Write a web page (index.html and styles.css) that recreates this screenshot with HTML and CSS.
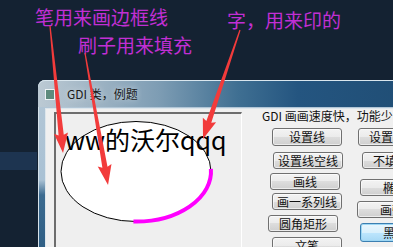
FILE: index.html
```html
<!DOCTYPE html>
<html lang="zh-CN">
<head>
    <meta charset="UTF-8">
    <title>GDI 类，例题</title>
    <link rel="stylesheet" href="styles.css">
</head>
<body>
    <div class="desk-band"></div>

    <div class="window">
        <div class="titlebar">
            <span class="app-icon"></span>
            <span class="title">GDI 类，例题</span>
        </div>
        <div class="client">
            <div class="picture">
                <svg width="184" height="140" viewBox="0 0 184 140">
                    <ellipse cx="80" cy="57.5" rx="75" ry="50" fill="#fff" stroke="#000" stroke-width="1"/>
                    <path d="M154.9 54.9 A75 50 0 0 1 77.4 107.5" fill="none" stroke="#ff00ff" stroke-width="4"/>
                    <text x="9" y="36" class="draw-text">ww的沃尔qqq</text>
                </svg>
            </div>
            <div class="panel">
                <div class="info">GDI 画画速度快，功能少</div>
                <div class="buttons">
                    <div class="col col1">
                        <button class="btn tall ml4">设置线</button>
                        <button class="btn ml5 mt6">设置线空线</button>
                        <button class="btn ml2 mt4">画线</button>
                        <button class="btn ml4 mt3">画一系列线</button>
                        <button class="btn mt5">圆角矩形</button>
                        <button class="btn tall ml4 mt5">文笔</button>
                    </div>
                    <div class="col col2">
                        <button class="btn tall ml1">设置画刷</button>
                        <button class="btn ml5 mt6">不填充色</button>
                        <button class="btn ml3 mt10">椭圆</button>
                        <button class="btn mt5">画弧</button>
                        <button class="btn default ml3 mt5">黑色</button>
                    </div>
                </div>
            </div>
        </div>
    </div>

    <!-- annotations -->
    <div class="note note-pen">笔用来画边框线</div>
    <div class="note note-brush">刷子用来填充</div>
    <div class="note note-font">字，用来印的</div>

    <svg class="arrows" width="393" height="247" viewBox="0 0 393 247">
        <g fill="#f23b3b">
            <polygon transform="translate(50,26) rotate(84.15)" points="0,-0.6 109.7,-2.6 107.7,-7 127.7,0 107.7,7 109.7,2.6 0,0.6"/>
            <polygon transform="translate(85,53) rotate(80.1)" points="0,-0.6 116,-2.6 114,-7 134,0 114,7 116,2.6 0,0.6"/>
            <polygon transform="translate(240,30) rotate(108.75)" points="0,-0.6 97,-2.6 95,-7 115,0 95,7 97,2.6 0,0.6"/>
        </g>
    </svg>
</body>
</html>
```

FILE: styles.css
```css
body {
    margin: 0;
    width: 393px;
    height: 247px;
    overflow: hidden;
    position: relative;
    background-color: #142232;
    font-family: "Noto Sans CJK SC", "Noto Sans", sans-serif;
}

.desk-band {
    position: absolute;
    left: 0;
    top: 152px;
    width: 37px;
    height: 18px;
    background-color: #1d3450;
}

.window {
    position: absolute;
    left: 38px;
    top: 80px;
    width: 400px;
    height: 190px;
    border-radius: 7px 7px 0 0;
    background: linear-gradient(to bottom, #b4c7d6 0, #a9c1d4 100px, #3c6b90 115px, #2b5a80 100%);
    box-shadow: inset 1px 1px 0 #d6e2ea;
    overflow: hidden;
}

.titlebar {
    height: 27px;
    display: flex;
    align-items: center;
    padding-left: 7px;
    background: linear-gradient(to right, #bccad4 0, #a3b7c6 50px, #7e9db4 120px, #3f6f92 200px, #245580 260px, #1f4c72 100%);
    border-radius: 7px 7px 0 0;
    box-shadow: inset 0 1px 0 #d9e6ee;
}

.app-icon {
    width: 8px;
    height: 9px;
    border: 1px solid #eef3f5;
    background-color: #5e8b7d;
    margin-top: 1px;
}

.title {
    margin-left: 12px;
    font-size: 12px;
    line-height: 14px;
    color: #1a1a1a;
    text-shadow: 0 0 6px rgba(255, 255, 255, 0.6);
}

.client {
    margin-left: 7px;
    margin-top: 1px;
    height: 170px;
    background-color: #f0f0f0;
    border-top: 1px solid #dde6ec;
    border-left: 1px solid #dde6ec;
    padding: 3px 0 0 8px;
    display: flex;
    box-sizing: border-box;
}

.picture {
    width: 188px;
    height: 150px;
    flex-shrink: 0;
    box-sizing: border-box;
    border-top: 2px solid #6d6d6d;
    border-left: 2px solid #6d6d6d;
    border-right: 1px solid #ffffff;
    background-color: #efefef;
}

.picture svg {
    display: block;
}

.draw-text {
    font-family: "Noto Sans CJK SC", sans-serif;
    font-size: 25px;
    fill: #000;
}

.panel {
    margin-left: 20px;
    display: flex;
    flex-direction: column;
    flex-shrink: 0;
    width: 200px;
}

.info {
    margin-top: -2px;
    font-size: 12px;
    line-height: 12px;
    height: 12px;
    color: #111;
    white-space: nowrap;
}

.buttons {
    display: flex;
    margin-top: 6px;
    margin-left: 6px;
}

.col {
    display: flex;
    flex-direction: column;
    align-items: flex-start;
}

.col1 {
    width: 89px;
}

.btn {
    width: 70px;
    height: 17px;
    padding: 0;
    font-family: "Noto Sans CJK SC", sans-serif;
    font-size: 12px;
    line-height: 14px;
    color: #111;
    border: 1px solid #707070;
    border-radius: 3px;
    background: linear-gradient(to bottom, #f3f3f3 0, #ebebeb 50%, #dddddd 50%, #cfcfcf 100%);
    box-shadow: inset 0 0 0 1px rgba(255, 255, 255, 0.6);
    flex-shrink: 0;
}

.btn.tall {
    height: 18px;
}

.btn.default {
    height: 19px;
    border-color: #3c7fb1;
    background: linear-gradient(to bottom, #eaf6fd 0, #d9f0fc 50%, #bee6fd 50%, #a7d9f5 100%);
    box-shadow: inset 0 0 0 1px #9ed7f4;
}

/* hand-placed offsets of the form's buttons */
.ml1 { margin-left: 1px; }
.ml2 { margin-left: 2px; }
.ml3 { margin-left: 3px; }
.ml4 { margin-left: 4px; }
.ml5 { margin-left: 5px; }
.mt3 { margin-top: 3px; }
.mt4 { margin-top: 4px; }
.mt5 { margin-top: 5px; }
.mt6 { margin-top: 6px; }
.mt10 { margin-top: 10px; }

.note {
    position: absolute;
    font-size: 19px;
    line-height: 19px;
    color: #c12fd4;
    white-space: nowrap;
}

.note-pen {
    left: 35px;
    top: 7px;
}

.note-brush {
    left: 78px;
    top: 35px;
}

.note-font {
    left: 227px;
    top: 10px;
}

.arrows {
    position: absolute;
    left: 0;
    top: 0;
    pointer-events: none;
}
```
